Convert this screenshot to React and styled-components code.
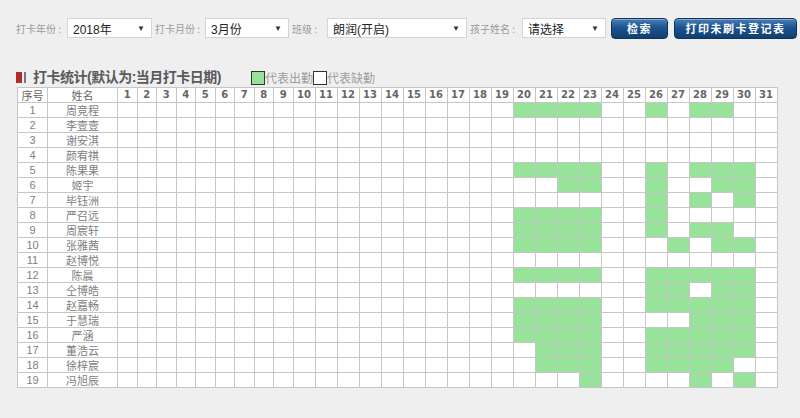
import React from "react";
import styled, { createGlobalStyle } from "styled-components";

const GlobalStyle = createGlobalStyle`
  html, body {
    margin: 0;
    padding: 0;
    background: #efefef;
    font-family: "Liberation Sans", "Noto Sans CJK SC", sans-serif;
  }
`;

const green = "#97e39a";
const border = "#c6c6c6";

const Page = styled.div`
  width: 800px;
  height: 418px;
  overflow: hidden;
  padding-top: 17px;
  box-sizing: border-box;
`;

const Toolbar = styled.div`
  display: flex;
  align-items: center;
  height: 22px;
  padding-left: 16px;
`;

const Label = styled.span`
  flex: none;
  width: ${p => p.$w}px;
  font-family: "Noto Sans CJK SC", sans-serif;
  font-size: 10px;
  color: #9a9a9a;
  white-space: nowrap;
`;

const Select = styled.div`
  flex: none;
  display: flex;
  align-items: center;
  justify-content: space-between;
  box-sizing: border-box;
  width: ${p => p.$w}px;
  height: 20px;
  margin-right: ${p => p.$gap ?? 3}px;
  padding: 0 6px 0 5px;
  background: #fff;
  border: 1px solid #d4d4d4;
  font-size: 12px;
  color: #222;
  &::after {
    content: "▼";
    font-size: 8px;
    color: #333;
  }
`;

const Button = styled.button`
  flex: 0 0 ${p => p.$w}px;
  box-sizing: border-box;
  height: 21px;
  width: ${p => p.$w}px;
  margin-left: ${p => p.$ml}px;
  border: 1px solid #0e3560;
  border-radius: 4px;
  background: linear-gradient(to bottom, #4a7fb5 0%, #1d5590 45%, #0f3f70 100%);
  box-shadow: inset 0 1px 0 rgba(255, 255, 255, 0.35);
  color: #fff;
  font-family: "Noto Sans CJK SC", sans-serif;
  font-size: 11px;
  font-weight: bold;
  letter-spacing: 1.5px;
  padding: 0;
`;

const TitleRow = styled.div`
  display: flex;
  align-items: flex-end;
  margin: 27px 0 0 16px;
  height: 20px;
`;

const Title = styled.h3`
  display: flex;
  align-items: center;
  margin: 0;
  font-family: "Liberation Sans", "Noto Sans CJK SC", sans-serif;
  font-size: 14px;
  letter-spacing: -0.5px;
  line-height: 18px;
  font-weight: bold;
  color: #5a5a5a;
`;

const Mark = styled.span`
  display: inline-block;
  width: 6px;
  height: 11px;
  background: #b22a2a;
  border-right: 2px solid #efefef;
  box-shadow: 2px 0 0 #777;
  margin-right: 9px;
`;

const Legend = styled.div`
  display: flex;
  align-items: center;
  margin-left: 30px;
  font-family: "Noto Sans CJK SC", sans-serif;
  font-size: 12px;
  color: #9d9d9d;
`;

const Swatch = styled.span`
  display: inline-block;
  width: 12px;
  height: 12px;
  border: 1px solid #333;
  background: ${p => p.$fill};
`;

const Table = styled.table`
  border-collapse: collapse;
  margin: 1px 0 0 17px;
  table-layout: fixed;
  background: #fff;
  font-family: "Noto Sans CJK SC", sans-serif;
`;

const Th = styled.th`
  border: 1px solid ${border};
  height: 14px;
  padding: 0;
  font-size: ${p => (p.$cn ? 11 : 10)}px;
  font-weight: ${p => (p.$cn ? "normal" : "bold")};
  font-family: ${p => (p.$cn ? `"Noto Sans CJK SC", sans-serif` : `"DejaVu Sans", sans-serif`)};
  color: #666;
  line-height: 14px;
  text-align: center;
`;

const Td = styled.td`
  border: 1px solid ${border};
  height: 14px;
  padding: 0;
  font-size: 11px;
  line-height: 14px;
  color: #808080;
  text-align: center;
  background: ${p => (p.$on ? green : "#fff")};
`;

const NumCell = styled(Td)`
  font-family: "Liberation Sans", sans-serif;
  font-size: 11px;
`;

const names = [
  "周竞程", "李壹壹", "谢安淇", "颜宥祺", "陈果果", "姬宇", "毕钰洲",
  "严召远", "周宸轩", "张雅茜", "赵博悦", "陈晨", "仝博皓", "赵嘉畅",
  "于慧瑞", "严涵", "董浩云", "徐梓宸", "冯旭辰"
];

// days present per row
const present = [
  [20, 21, 22, 23, 26, 28, 29],
  [],
  [],
  [],
  [20, 21, 22, 23, 26, 28, 29, 30],
  [22, 23, 26, 29, 30],
  [26, 28, 30],
  [20, 21, 22, 23, 26],
  [20, 21, 22, 23, 26, 28, 29],
  [20, 21, 22, 23, 27, 29, 30],
  [],
  [20, 21, 22, 23, 26, 27, 28, 29, 30],
  [26, 27, 29, 30],
  [20, 21, 22, 23, 26, 27, 28, 29, 30],
  [20, 21, 22, 23, 28, 29, 30],
  [20, 21, 22, 23, 26, 27, 28, 29, 30],
  [21, 22, 23, 26, 27, 28, 29, 30],
  [21, 22, 23, 26, 27, 28, 29],
  [23, 28, 30]
];

const days = Array.from({ length: 31 }, (_, i) => i + 1);

export default function App() {
  return (
    <Page>
      <GlobalStyle />
      <Toolbar>
        <Label $w={51}>打卡年份 :</Label>
        <Select $w={85}>2018年</Select>
        <Label $w={50}>打卡月份 :</Label>
        <Select $w={84}>3月份</Select>
        <Label $w={35}>班级 :</Label>
        <Select $w={140}>朗润(开启)</Select>
        <Label $w={52}>孩子姓名 :</Label>
        <Select $w={84} $gap={0}>请选择</Select>
        <Button $w={57} $ml={5}>检索</Button>
        <Button $w={123} $ml={6}>打印未刷卡登记表</Button>
      </Toolbar>

      <TitleRow>
        <Title>
          <Mark />
          打卡统计(默认为:当月打卡日期)
        </Title>
        <Legend>
          <Swatch $fill={green} />代表出勤
          <Swatch $fill="#fff" />代表缺勤
        </Legend>
      </TitleRow>

      <Table>
        <colgroup>
          <col style={{ width: 30 }} />
          <col style={{ width: 70 }} />
          {days.map(d => (
            <col key={d} style={{ width: d < 10 ? 19.5 : 22 }} />
          ))}
        </colgroup>
        <thead>
          <tr>
            <Th $cn>序号</Th>
            <Th $cn>姓名</Th>
            {days.map(d => (
              <Th key={d}>{d}</Th>
            ))}
          </tr>
        </thead>
        <tbody>
          {names.map((n, i) => (
            <tr key={n}>
              <NumCell>{i + 1}</NumCell>
              <Td>{n}</Td>
              {days.map(d => (
                <Td key={d} $on={present[i].includes(d)} />
              ))}
            </tr>
          ))}
        </tbody>
      </Table>
    </Page>
  );
}
